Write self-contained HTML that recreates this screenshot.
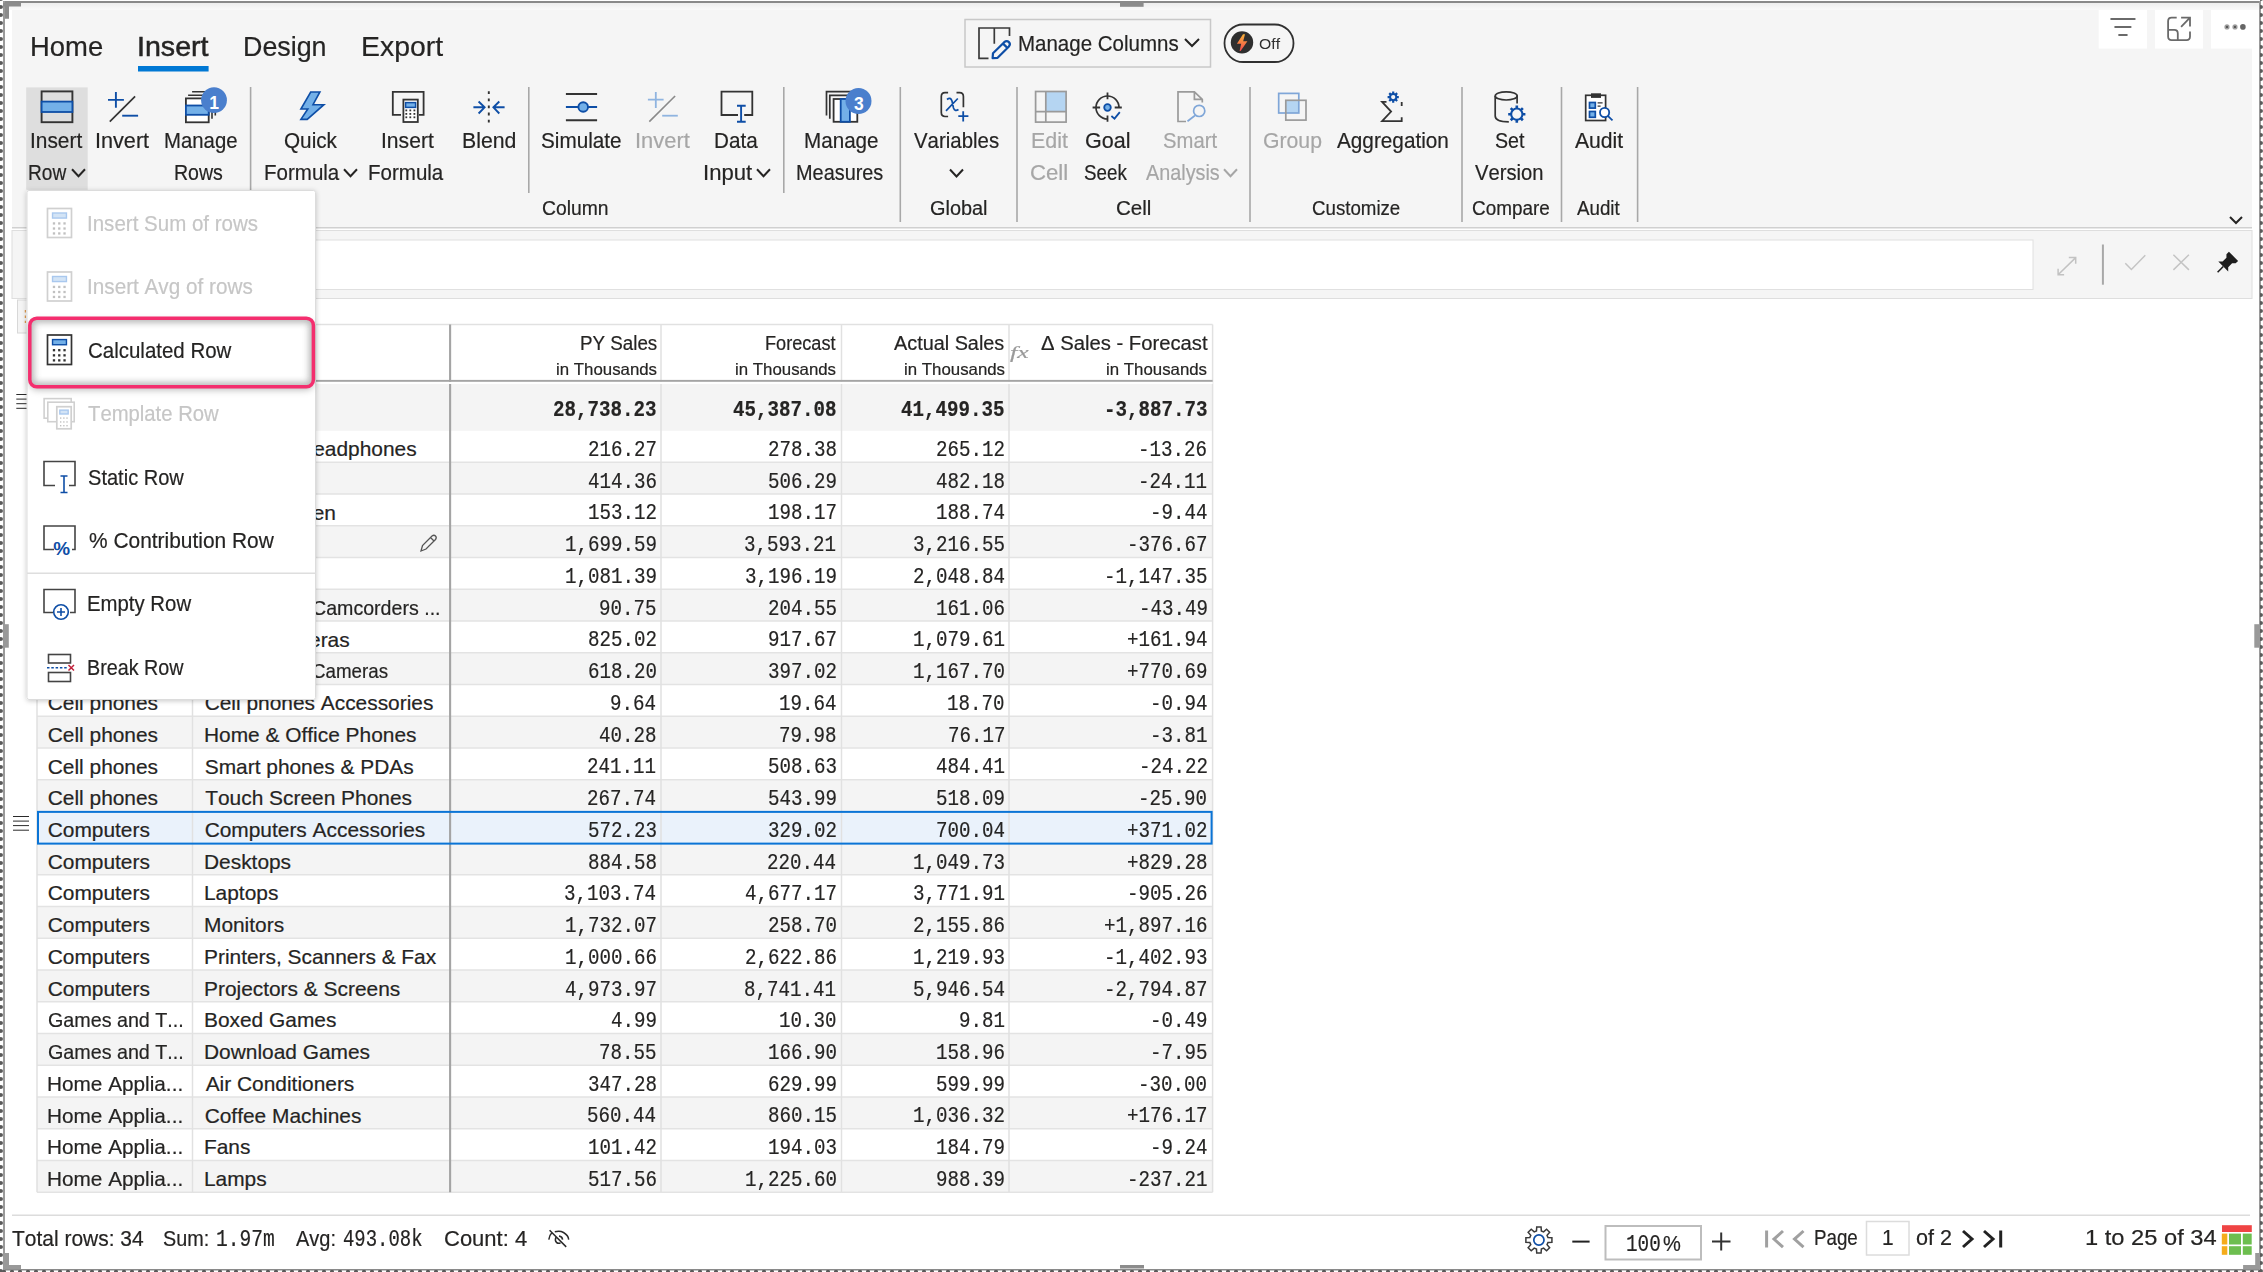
<!DOCTYPE html>
<html><head><meta charset="utf-8"><style>
html,body{margin:0;padding:0;width:2263px;height:1272px;overflow:hidden;background:#fff;}
body{position:relative;font-family:"Liberation Sans",sans-serif;color:#252423;font-kerning:none;}
.t{position:absolute;white-space:nowrap;line-height:1;transform-origin:0 0;-webkit-text-stroke-width:0.2px;}
svg{position:absolute;left:0;top:0;}
#menu{position:absolute;left:0;top:0;width:2263px;height:1272px;z-index:5;}
</style></head><body>
<svg width="2263" height="1272" viewBox="0 0 2263 1272"><rect x="12" y="10" width="2240" height="217.5" fill="#f5f5f5" /><linearGradient id="sh" x1="0" y1="0" x2="0" y2="1"><stop offset="0" stop-color="#eeeeee"/><stop offset="1" stop-color="#fafafa"/></linearGradient><rect x="5" y="3" width="2254" height="7" fill="url(#sh)" /><rect x="2098.7" y="10" width="48.30000000000018" height="38.6" fill="#ffffff" /><rect x="2155" y="10" width="48" height="38.6" fill="#ffffff" /><rect x="2211" y="10" width="47.5" height="38.6" fill="#ffffff" /><rect x="12" y="227" width="2240" height="1.5" fill="#d0d0d0" /><rect x="12" y="230.5" width="2240" height="68" fill="#f5f5f5" stroke="#dedede" stroke-width="1"/><rect x="30" y="240" width="2003" height="49.5" fill="#ffffff" stroke="#e0e0e0" stroke-width="1"/><rect x="17.5" y="300" width="30" height="33" fill="#f4f4f4" stroke="#d8d8d8" stroke-width="1"/><line x1="25.4" y1="310" x2="25.4" y2="323" stroke="#dd9a50" stroke-width="1.3" stroke-dasharray="2.6 2.8"/><rect x="3" y="1" width="2257" height="2" fill="#8a8a8a" /><rect x="3" y="1269" width="2257" height="1.5" fill="#8a8a8a" /><rect x="3" y="1" width="2" height="1269" fill="#9a9a9a" /><rect x="2259" y="1" width="2" height="1269" fill="#9a9a9a" /><pattern id="dotv" width="4" height="8" patternUnits="userSpaceOnUse" y="3"><ellipse cx="0.8" cy="4" rx="2.2" ry="1.9" fill="#5a5a5a"/></pattern><pattern id="doth" width="8" height="4" patternUnits="userSpaceOnUse"><circle cx="4" cy="3.5" r="2" fill="#5a5a5a"/></pattern><rect x="0" y="0" width="3" height="1272" fill="url(#dotv)" /><rect x="2260" y="0" width="3" height="1272" fill="url(#dotv)" /><rect x="0" y="1270" width="2263" height="2" fill="url(#doth)" /><path d="M3 3H21V6.6H9V18.7H5V6.6H3Z" fill="#8c8c8c"/><path d="M3 1269.3H21V1265.1H9V1253.1H5V1265.1H3Z" fill="#999999"/><path d="M2259.3 1269.3H2243.1V1265.1H2255.2V1253.1H2259.3Z" fill="#999999"/><rect x="1120" y="2.6" width="23.6" height="4.2" fill="#8c8c8c" /><rect x="1120" y="1265" width="24" height="3.5" fill="#8c8c8c" /><rect x="2254.3" y="624.2" width="5.7" height="23.5" fill="#999999" /><rect x="3.1" y="624.2" width="5.7" height="23.5" fill="#999999" /><rect x="138" y="66" width="70.6" height="5.5" fill="#0078d4" /><rect x="965" y="19.5" width="245.5" height="47.5" fill="none" stroke="#c8c8c8" stroke-width="1.5"/><path d="M1185 39L1192 46L1199 39" fill="none" stroke="#252423" stroke-width="2"/><path d="M988.5 58.3H979V28H1009.5V35.9 M994.3 28V43.8" fill="none" stroke="#3a3a3a" stroke-width="1.7"/><path d="M992.6 58.2L993 53.2L1004.2 42.2Q1006.8 40 1008.9 42.1Q1011 44.4 1008.7 46.7L997.6 57.8Z M1003 43.6L1007.4 47.9" fill="none" stroke="#0e4ea6" stroke-width="2.2" stroke-linejoin="round"/><rect x="1224.5" y="24.5" width="69" height="37.5" fill="none" rx="18.7" stroke="#303030" stroke-width="1.8"/><circle cx="1242" cy="42.4" r="11.2" fill="#2e2e2e"/><linearGradient id="lg" x1="0" y1="0" x2="0" y2="1"><stop offset="0" stop-color="#f9b43a"/><stop offset="1" stop-color="#f2484c"/></linearGradient><path d="M1243 34.2H1245L1243.2 41.3H1247.4L1240.6 50.9H1239.6L1241.2 43.8H1236.9Z" fill="url(#lg)"/><path d="M2111.2 19H2134.7 M2115.2 26.9H2130.6 M2119.1 34.9H2126.8" stroke="#6a6a6a" stroke-width="2" stroke-linecap="round"/><path d="M2176.7 17.7H2171.6Q2168.1 17.7 2168.1 21.2V36.6Q2168.1 40.1 2171.6 40.1H2186.5Q2190 40.1 2190 36.6V31.4 M2168.1 29.9H2174.3Q2177.8 29.9 2177.8 33.4V40.1 M2181.1 26.9L2190 17.7 M2181.1 17.7H2190V26.6" fill="none" stroke="#6a6a6a" stroke-width="1.8"/><circle cx="2227" cy="26.9" r="2.6" fill="#a0a0a0"/><circle cx="2227" cy="26.9" r="1.2" fill="#555"/><circle cx="2235" cy="26.9" r="2.6" fill="#a0a0a0"/><circle cx="2235" cy="26.9" r="1.2" fill="#555"/><circle cx="2242.9" cy="26.9" r="2.8" fill="#666"/><path d="M2230 217L2236 223L2242 217" fill="none" stroke="#252423" stroke-width="2"/><line x1="250.6" y1="87" x2="250.6" y2="190" stroke="#a8a8a8" stroke-width="1.6" /><line x1="528.8" y1="87" x2="528.8" y2="193" stroke="#a8a8a8" stroke-width="1.6" /><line x1="783.8" y1="87" x2="783.8" y2="193" stroke="#a8a8a8" stroke-width="1.6" /><line x1="900.3" y1="87" x2="900.3" y2="222" stroke="#a8a8a8" stroke-width="1.6" /><line x1="1017" y1="87" x2="1017" y2="222" stroke="#a8a8a8" stroke-width="1.6" /><line x1="1250" y1="87" x2="1250" y2="222" stroke="#a8a8a8" stroke-width="1.6" /><line x1="1462" y1="87" x2="1462" y2="222" stroke="#a8a8a8" stroke-width="1.6" /><line x1="1561.5" y1="87" x2="1561.5" y2="222" stroke="#a8a8a8" stroke-width="1.6" /><line x1="1637.6" y1="87" x2="1637.6" y2="222" stroke="#a8a8a8" stroke-width="1.6" /><rect x="26.2" y="87.4" width="61.5" height="102.4" fill="#dedede" /><path d="M72 169.2L78.5 176.2L85 169.2" fill="none" stroke="#252423" stroke-width="2"/><path d="M344 169.2L350.5 176.2L357 169.2" fill="none" stroke="#252423" stroke-width="2"/><path d="M757 169.2L763.5 176.2L770 169.2" fill="none" stroke="#252423" stroke-width="2"/><path d="M950 169.5L956.5 176.5L963 169.5" fill="none" stroke="#252423" stroke-width="2"/><path d="M1224 169.2L1230.5 176.2L1237 169.2" fill="none" stroke="#a6a6a6" stroke-width="2"/><path d="M2058.1 274.8L2075.7 257.6 M2068.8 257.6H2075.7V263.7 M2058.1 268.8V274.8H2064.1" fill="none" stroke="#c2c2c2" stroke-width="1.5"/><line x1="2102.9" y1="244.5" x2="2102.9" y2="284.7" stroke="#a8a8a8" stroke-width="2" /><path d="M2125.3 263.2L2131.4 269.5L2145.3 255.3" fill="none" stroke="#c4c4c4" stroke-width="1.5"/><path d="M2173.4 254.8L2188.9 269.9 M2188.9 254.8L2173.4 269.9" fill="none" stroke="#c4c4c4" stroke-width="1.5"/><g transform="translate(2217.6 272.2) rotate(45)"><path d="M0 0V-8" stroke="#1e1e1e" stroke-width="1.6"/><path d="M-7 -8H7L4 -11V-16.5L6.5 -19V-22.5H-6.5V-19L-4 -16.5V-11Z" fill="#1e1e1e"/></g><rect x="37" y="324.5" width="1175.6" height="857.8" fill="#ffffff" /><rect x="37" y="384" width="1175.6" height="46.8" fill="#f4f4f4" /><rect x="37" y="462.24" width="1175.6" height="31.74" fill="#f4f4f4" /><rect x="37" y="525.72" width="1175.6" height="31.74" fill="#f4f4f4" /><rect x="37" y="589.2" width="1175.6" height="31.74" fill="#f4f4f4" /><rect x="37" y="652.68" width="1175.6" height="31.74" fill="#f4f4f4" /><rect x="37" y="716.16" width="1175.6" height="31.74" fill="#f4f4f4" /><rect x="37" y="779.64" width="1175.6" height="31.74" fill="#f4f4f4" /><rect x="37" y="843.12" width="1175.6" height="31.74" fill="#f4f4f4" /><rect x="37" y="906.5999999999999" width="1175.6" height="31.74" fill="#f4f4f4" /><rect x="37" y="970.0799999999999" width="1175.6" height="31.74" fill="#f4f4f4" /><rect x="37" y="1033.56" width="1175.6" height="31.74" fill="#f4f4f4" /><rect x="37" y="1097.04" width="1175.6" height="31.74" fill="#f4f4f4" /><rect x="37" y="1160.52" width="1175.6" height="31.74" fill="#f4f4f4" /><rect x="37" y="811.38" width="1175.6" height="31.74" fill="#eaf2fb" /><line x1="37" y1="462.24" x2="1212.6" y2="462.24" stroke="#e3e3e3" stroke-width="1.5" /><line x1="37" y1="493.98" x2="1212.6" y2="493.98" stroke="#e3e3e3" stroke-width="1.5" /><line x1="37" y1="525.72" x2="1212.6" y2="525.72" stroke="#e3e3e3" stroke-width="1.5" /><line x1="37" y1="557.46" x2="1212.6" y2="557.46" stroke="#e3e3e3" stroke-width="1.5" /><line x1="37" y1="589.2" x2="1212.6" y2="589.2" stroke="#e3e3e3" stroke-width="1.5" /><line x1="37" y1="620.94" x2="1212.6" y2="620.94" stroke="#e3e3e3" stroke-width="1.5" /><line x1="37" y1="652.68" x2="1212.6" y2="652.68" stroke="#e3e3e3" stroke-width="1.5" /><line x1="37" y1="684.42" x2="1212.6" y2="684.42" stroke="#e3e3e3" stroke-width="1.5" /><line x1="37" y1="716.16" x2="1212.6" y2="716.16" stroke="#e3e3e3" stroke-width="1.5" /><line x1="37" y1="747.9" x2="1212.6" y2="747.9" stroke="#e3e3e3" stroke-width="1.5" /><line x1="37" y1="779.64" x2="1212.6" y2="779.64" stroke="#e3e3e3" stroke-width="1.5" /><line x1="37" y1="874.8599999999999" x2="1212.6" y2="874.8599999999999" stroke="#e3e3e3" stroke-width="1.5" /><line x1="37" y1="906.5999999999999" x2="1212.6" y2="906.5999999999999" stroke="#e3e3e3" stroke-width="1.5" /><line x1="37" y1="938.3399999999999" x2="1212.6" y2="938.3399999999999" stroke="#e3e3e3" stroke-width="1.5" /><line x1="37" y1="970.0799999999999" x2="1212.6" y2="970.0799999999999" stroke="#e3e3e3" stroke-width="1.5" /><line x1="37" y1="1001.8199999999999" x2="1212.6" y2="1001.8199999999999" stroke="#e3e3e3" stroke-width="1.5" /><line x1="37" y1="1033.56" x2="1212.6" y2="1033.56" stroke="#e3e3e3" stroke-width="1.5" /><line x1="37" y1="1065.3" x2="1212.6" y2="1065.3" stroke="#e3e3e3" stroke-width="1.5" /><line x1="37" y1="1097.04" x2="1212.6" y2="1097.04" stroke="#e3e3e3" stroke-width="1.5" /><line x1="37" y1="1128.78" x2="1212.6" y2="1128.78" stroke="#e3e3e3" stroke-width="1.5" /><line x1="37" y1="1160.52" x2="1212.6" y2="1160.52" stroke="#e3e3e3" stroke-width="1.5" /><line x1="37" y1="1192.26" x2="1212.6" y2="1192.26" stroke="#e3e3e3" stroke-width="1.5" /><line x1="37" y1="324.5" x2="1212.6" y2="324.5" stroke="#e1e1e1" stroke-width="1.5" /><line x1="37" y1="324.5" x2="37" y2="1192.3" stroke="#e1e1e1" stroke-width="1.5" /><line x1="192.5" y1="324.5" x2="192.5" y2="1192.3" stroke="#e1e1e1" stroke-width="1.5" /><line x1="661" y1="324.5" x2="661" y2="1192.3" stroke="#e1e1e1" stroke-width="1.5" /><line x1="841.5" y1="324.5" x2="841.5" y2="1192.3" stroke="#e1e1e1" stroke-width="1.5" /><line x1="1009" y1="324.5" x2="1009" y2="1192.3" stroke="#e1e1e1" stroke-width="1.5" /><line x1="1212.6" y1="324.5" x2="1212.6" y2="1192.3" stroke="#e1e1e1" stroke-width="1.5" /><line x1="450.1" y1="324.5" x2="450.1" y2="1192.3" stroke="#a4a4a4" stroke-width="2.1" /><rect x="37" y="381.8" width="1175.6" height="2.2" fill="#ffffff" /><rect x="37" y="379.9" width="1175.6" height="1.9" fill="#a4a4a4" /><rect x="38" y="811.88" width="1173.6" height="31.74" fill="none" stroke="#0a74d6" stroke-width="2"/><path d="M421 551L422.5 545.5L432 536Q434 534.5 435.5 536Q437 537.5 435.5 539.5L426 549Z M430.5 537.5L434 541" fill="none" stroke="#555" stroke-width="1.3"/><line x1="13" y1="816.5" x2="29" y2="816.5" stroke="#2a2a2a" stroke-width="1.0" /><line x1="13" y1="821.1" x2="29" y2="821.1" stroke="#2a2a2a" stroke-width="1.0" /><line x1="13" y1="825.6" x2="29" y2="825.6" stroke="#2a2a2a" stroke-width="1.0" /><line x1="13" y1="830.2" x2="29" y2="830.2" stroke="#2a2a2a" stroke-width="1.0" /><line x1="16.3" y1="394.5" x2="29" y2="394.5" stroke="#2a2a2a" stroke-width="1.0" /><line x1="16.3" y1="399.1" x2="29" y2="399.1" stroke="#2a2a2a" stroke-width="1.0" /><line x1="16.3" y1="403.7" x2="29" y2="403.7" stroke="#2a2a2a" stroke-width="1.0" /><line x1="16.3" y1="408.3" x2="29" y2="408.3" stroke="#2a2a2a" stroke-width="1.0" /><rect x="12" y="1214.5" width="2238" height="1.5" fill="#dcdcdc" /><path d="M548.8 1239.6Q549.5 1235 552 1232.5 M554.8 1231.8Q560 1230.5 563.5 1232.5Q568.5 1235.5 568.7 1239.6 M559 1236Q562.3 1236.5 562.6 1239.6 M556 1237Q554.5 1240.5 556.5 1242.5Q558.5 1243.8 560.5 1242.8 M549.6 1230.3L566.2 1246.9" fill="none" stroke="#2a2a2a" stroke-width="1.5"/><path d="M1536.47 1230.92L1536.72 1226.98L1541.08 1226.98L1541.33 1230.92L1543.60 1231.86L1546.57 1229.25L1549.65 1232.33L1547.04 1235.30L1547.98 1237.57L1551.92 1237.82L1551.92 1242.18L1547.98 1242.43L1547.04 1244.70L1549.65 1247.67L1546.57 1250.75L1543.60 1248.14L1541.33 1249.08L1541.08 1253.02L1536.72 1253.02L1536.47 1249.08L1534.20 1248.14L1531.23 1250.75L1528.15 1247.67L1530.76 1244.70L1529.82 1242.43L1525.88 1242.18L1525.88 1237.82L1529.82 1237.57L1530.76 1235.30L1528.15 1232.33L1531.23 1229.25L1534.20 1231.86Z" fill="none" stroke="#3a3a3a" stroke-width="1.5" stroke-linejoin="miter"/><circle cx="1538.9" cy="1240" r="5.1" fill="none" stroke="#0e4ea6" stroke-width="1.7"/><line x1="1572.3" y1="1241.6" x2="1589.6" y2="1241.6" stroke="#222" stroke-width="2" /><rect x="1605.5" y="1226" width="95.5" height="33.5" fill="#fff" stroke="#bdbdbd" stroke-width="2"/><path d="M1712 1241.5H1730.5 M1721.2 1232.5V1250.5" stroke="#333" stroke-width="2"/><line x1="1766.6" y1="1230.5" x2="1766.6" y2="1247.5" stroke="#a0a0a0" stroke-width="3" /><path d="M1783 1231L1774 1239.1L1783 1247.2" fill="none" stroke="#a0a0a0" stroke-width="3"/><path d="M1803.5 1231L1794.5 1239.1L1803.5 1247.2" fill="none" stroke="#a0a0a0" stroke-width="3"/><rect x="1866.5" y="1221.5" width="42.5" height="33.5" fill="#fff" stroke="#dcdcdc" stroke-width="1.5"/><path d="M1963 1231L1972 1239L1963 1247" fill="none" stroke="#222" stroke-width="3"/><path d="M1984 1231L1993 1239L1984 1247" fill="none" stroke="#222" stroke-width="3"/><line x1="2000.7" y1="1230.5" x2="2000.7" y2="1247.5" stroke="#222" stroke-width="3" /><rect x="2222" y="1225.2" width="29.8" height="6.8" fill="#ef4444" /><rect x="2221.8" y="1233.6" width="5.5" height="10.9" fill="#f5ac1b" /><rect x="2221.8" y="1246.2" width="5.5" height="8.6" fill="#f5ac1b" /><rect x="2229" y="1233.6" width="12" height="10.9" fill="#6dbe4f" /><rect x="2229" y="1246.2" width="12" height="8.6" fill="#6dbe4f" /><rect x="2242.8" y="1233.6" width="8.899999999999636" height="10.9" fill="#6dbe4f" /><rect x="2242.8" y="1246.2" width="8.899999999999636" height="8.6" fill="#6dbe4f" /><rect x="41.6" y="91.4" width="30.8" height="30.8" fill="none" stroke="#333333" stroke-width="1.9"/><rect x="41.6" y="101.6" width="30.8" height="10.4" fill="#73b0e8" stroke="#0e4ea6" stroke-width="1.8"/><path d="M108 99.9H123.9 M115.9 92V107.7" stroke="#0e4ea6" stroke-width="1.9"/><line x1="109.8" y1="121.6" x2="135.1" y2="96.3" stroke="#333333" stroke-width="1.7" /><path d="M122.2 115.7H138.1" stroke="#0e4ea6" stroke-width="1.9"/><path d="M192.1 91.8H212 M188.1 95.3H212 M212 95.3V118.7 M215.3 91.8V115.6" fill="none" stroke="#333333" stroke-width="1.6"/><rect x="185.9" y="98.4" width="22.8" height="23.9" fill="#ffffff" stroke="#333333" stroke-width="1.8"/><rect x="185.9" y="105.5" width="22.8" height="9.3" fill="#73b0e8" stroke="#0e4ea6" stroke-width="1.8"/><circle cx="214" cy="100.2" r="12.9" fill="#4a7fcd"/><text x="214" y="109" text-anchor="middle" font-family="Liberation Sans" font-weight="700" font-size="17.5" fill="#fff">1</text><path d="M310.7 92H319.9L313 104.7H323.9L307.2 119.4H300.9L307.8 109H300.9Z" fill="#73b0e8" stroke="#0e4ea6" stroke-width="1.6" stroke-linejoin="miter"/><path d="M401 114.8H392.8V91.8H423.6V114.8H419" fill="none" stroke="#333333" stroke-width="1.8"/><rect x="403.4" y="99.6" width="14.4" height="22.4" fill="#ffffff" stroke="#333333" stroke-width="1.8"/><rect x="405.6" y="102.6" width="10" height="4.8" fill="#73b0e8" stroke="#0e4ea6" stroke-width="1.5"/><rect x="405.40000000000003" y="109.5" width="1.8" height="1.8" fill="#333333" /><rect x="409.40000000000003" y="109.5" width="1.8" height="1.8" fill="#333333" /><rect x="413.5" y="109.5" width="1.8" height="1.8" fill="#333333" /><rect x="405.40000000000003" y="113.0" width="1.8" height="1.8" fill="#333333" /><rect x="409.40000000000003" y="113.0" width="1.8" height="1.8" fill="#333333" /><rect x="413.5" y="113.0" width="1.8" height="1.8" fill="#333333" /><rect x="405.40000000000003" y="116.39999999999999" width="1.8" height="1.8" fill="#333333" /><rect x="409.40000000000003" y="116.39999999999999" width="1.8" height="1.8" fill="#333333" /><rect x="413.5" y="116.39999999999999" width="1.8" height="1.8" fill="#333333" /><line x1="488.8" y1="91.3" x2="488.8" y2="122.5" stroke="#333333" stroke-width="1.9" stroke-dasharray="2.8 4.3"/><path d="M473.4 107.3H484.8 M478.6 101.5L484.6 107.3L478.6 113.5 M493.2 107.3H504.6 M499.3 101.5L493.4 107.3L499.3 113.5" fill="none" stroke="#0e4ea6" stroke-width="1.9"/><path d="M565.9 93.9H597.1 M565.9 120.3H597.1" stroke="#333333" stroke-width="2"/><path d="M565.9 107H578.3 M588.1 107H597.1" stroke="#0e4ea6" stroke-width="2"/><circle cx="583.2" cy="107" r="4.8" fill="#73b0e8" stroke="#0e4ea6" stroke-width="1.9"/><path d="M647.9 99.7H663.6 M655.8 92.1V107.9" stroke="#8fb4e0" stroke-width="1.8"/><line x1="649.3" y1="121.6" x2="675.1" y2="96" stroke="#8a8a8a" stroke-width="1.6" /><path d="M662.2 115.7H677.8" stroke="#8fb4e0" stroke-width="1.8"/><path d="M738 115H721.5V91.6H752.3V115H744.2" fill="none" stroke="#333333" stroke-width="1.8"/><path d="M741.1 105.8V121.8 M737 105.8H745.7 M737 121.8H745.7" fill="none" stroke="#0e4ea6" stroke-width="1.9"/><path d="M826.5 115.5V91.6H858 M829.8 118.7V95.4H858" fill="none" stroke="#333333" stroke-width="1.7"/><rect x="833.6" y="99" width="23.7" height="22.8" fill="#ffffff" stroke="#333333" stroke-width="1.8"/><rect x="840.7" y="99" width="9.2" height="22.8" fill="#73b0e8" stroke="#0e4ea6" stroke-width="1.8"/><circle cx="858.5" cy="101" r="13" fill="#4a7fcd"/><text x="858.8" y="109.6" text-anchor="middle" font-family="Liberation Sans" font-weight="700" font-size="17.5" fill="#fff">3</text><path d="M948.1 92.6H945Q941.3 92.6 941.3 96.5V112.6Q941.3 116.5 945 116.5H948.1 M956.5 92.6H959.6Q963.4 92.6 963.4 96.5V107.2" fill="none" stroke="#333333" stroke-width="1.7"/><path d="M947 99.5Q950.5 96.5 952 101L953.5 108Q955 112 958.5 109.5 M957.8 98.5L946 110.8" fill="none" stroke="#0e4ea6" stroke-width="1.7"/><path d="M958.3 116.2H968.4 M963.2 111.2V121.4" stroke="#0e4ea6" stroke-width="1.8"/><rect x="1045.8" y="91.5" width="20.3" height="20.1" fill="#b5d5f2" /><rect x="1035.6" y="91.5" width="30.5" height="30.6" fill="none" stroke="#9a9a9a" stroke-width="1.7"/><path d="M1045.8 91.5V122.1 M1035.6 111.6H1066.1" stroke="#9a9a9a" stroke-width="1.7"/><path d="M1119 107.5A11.5 11.5 0 1 0 1107.5 119" fill="none" stroke="#333333" stroke-width="1.7"/><path d="M1107.5 92.6V99.3 M1092.6 107.5H1100.1 M1114.7 107.5H1121.8 M1107.5 115.6V121.8" stroke="#333333" stroke-width="1.8"/><circle cx="1107.5" cy="107.5" r="3.3" fill="#73b0e8" stroke="#0e4ea6" stroke-width="1.8"/><path d="M1111.4 116L1114.5 118.6L1119.8 112.1" fill="none" stroke="#0e4ea6" stroke-width="1.8"/><path d="M1186 121.5H1178V91.8H1194.4L1202.3 99.3V102.4 M1194.4 91.8V99.3H1202.3" fill="none" stroke="#9a9a9a" stroke-width="1.7"/><circle cx="1199.2" cy="110.9" r="5.6" fill="none" stroke="#7fa6d8" stroke-width="1.7"/><line x1="1195" y1="115.5" x2="1187.5" y2="121.2" stroke="#7fa6d8" stroke-width="1.7" /><rect x="1285.8" y="100.3" width="13" height="12.7" fill="#b5d5f2" /><rect x="1278.7" y="93.4" width="20.1" height="19.6" fill="none" stroke="#7fa6d8" stroke-width="1.7"/><rect x="1285.8" y="100.3" width="20.2" height="19.8" fill="none" stroke="#9a9a9a" stroke-width="1.7"/><path d="M1386.5 101.9H1382.1L1391.1 111.6L1382.1 121.2H1401.7V117.3 M1401.7 101.9V106.1" fill="none" stroke="#333333" stroke-width="1.8" stroke-linejoin="miter"/><path d="M1396.20 97.10L1398.80 97.10 M1395.32 99.22L1397.16 101.06 M1393.20 100.10L1393.20 102.70 M1391.08 99.22L1389.24 101.06 M1390.20 97.10L1387.60 97.10 M1391.08 94.98L1389.24 93.14 M1393.20 94.10L1393.20 91.50 M1395.32 94.98L1397.16 93.14 " stroke="#0e4ea6" stroke-width="2.2" stroke-linecap="butt"/><circle cx="1393.2" cy="97.1" r="3.1" fill="#f5f5f5" stroke="#0e4ea6" stroke-width="1.9"/><path d="M1495.2 96V116Q1495.2 121.8 1508.8 121.8 M1517.1 96V103.6" fill="none" stroke="#333333" stroke-width="1.7"/><ellipse cx="1506.2" cy="95.9" rx="11" ry="4.1" fill="none" stroke="#333333" stroke-width="1.7"/><path d="M1521.80 114.20L1525.40 114.20 M1520.34 117.74L1522.88 120.28 M1516.80 119.20L1516.80 122.80 M1513.26 117.74L1510.72 120.28 M1511.80 114.20L1508.20 114.20 M1513.26 110.66L1510.72 108.12 M1516.80 109.20L1516.80 105.60 M1520.34 110.66L1522.88 108.12 " stroke="#0e4ea6" stroke-width="2.6" stroke-linecap="butt"/><circle cx="1516.8" cy="114.2" r="5.6" fill="#f5f5f5" stroke="#0e4ea6" stroke-width="2"/><rect x="1585.7" y="95.3" width="19.9" height="25.2" fill="#ffffff" stroke="#333333" stroke-width="1.7"/><rect x="1591" y="93.3" width="10" height="4.6" fill="#333333" /><rect x="1589.5" y="102.5" width="5.8" height="5.6" fill="#73b0e8" stroke="#0e4ea6" stroke-width="1.7"/><rect x="1589.5" y="111.5" width="5.8" height="5.8" fill="#73b0e8" stroke="#0e4ea6" stroke-width="1.7"/><path d="M1597.6 102.9H1602.6 M1597.6 106.2H1600.6" stroke="#333333" stroke-width="1.3"/><circle cx="1604.6" cy="112.5" r="4.6" fill="#ffffff" stroke="#0e4ea6" stroke-width="1.8"/><line x1="1607.8" y1="115.9" x2="1612.5" y2="120.3" stroke="#0e4ea6" stroke-width="1.8" /></svg>
<div class="t" style="left:29.55px;top:32.90px;font-size:28px;transform:scaleX(0.9796);">Home</div><div class="t" style="left:136.57px;top:33.10px;font-size:28px;transform:scaleX(1.0215);-webkit-text-stroke:0.5px #252423;">Insert</div><div class="t" style="left:243.20px;top:33.10px;font-size:28px;transform:scaleX(0.9585);">Design</div><div class="t" style="left:361.07px;top:33.10px;font-size:28px;transform:scaleX(1.0149);">Export</div><div class="t" style="left:1017.82px;top:33.05px;font-size:22.5px;transform:scaleX(0.9109);">Manage Columns</div><div class="t" style="left:1259.26px;top:37.33px;font-size:14.5px;color:#303030;transform:scaleX(1.0861);-webkit-text-stroke-width:0;">Off</div><div class="t" style="left:30.08px;top:130.47px;font-size:22.6px;transform:scaleX(0.9247);">Insert</div><div class="t" style="left:28.13px;top:162.27px;font-size:22.6px;transform:scaleX(0.8453);">Row</div><div class="t" style="left:95.41px;top:130.47px;font-size:22.6px;transform:scaleX(0.9579);">Invert</div><div class="t" style="left:163.63px;top:130.47px;font-size:22.6px;transform:scaleX(0.9007);">Manage</div><div class="t" style="left:174.30px;top:162.27px;font-size:22.6px;transform:scaleX(0.8653);">Rows</div><div class="t" style="left:284.23px;top:130.47px;font-size:22.6px;transform:scaleX(0.9167);">Quick</div><div class="t" style="left:263.72px;top:162.27px;font-size:22.6px;transform:scaleX(0.9084);">Formula</div><div class="t" style="left:381.36px;top:130.47px;font-size:22.6px;transform:scaleX(0.9340);">Insert</div><div class="t" style="left:368.32px;top:162.27px;font-size:22.6px;transform:scaleX(0.9084);">Formula</div><div class="t" style="left:461.66px;top:130.47px;font-size:22.6px;transform:scaleX(0.9415);">Blend</div><div class="t" style="left:541.37px;top:130.47px;font-size:22.6px;transform:scaleX(0.9171);">Simulate</div><div class="t" style="left:634.69px;top:130.47px;font-size:22.6px;color:#a6a6a6;transform:scaleX(0.9690);">Invert</div><div class="t" style="left:714.10px;top:130.47px;font-size:22.6px;transform:scaleX(0.9155);">Data</div><div class="t" style="left:702.97px;top:162.27px;font-size:22.6px;transform:scaleX(0.9787);">Input</div><div class="t" style="left:804.31px;top:130.47px;font-size:22.6px;transform:scaleX(0.9134);">Manage</div><div class="t" style="left:796.37px;top:162.27px;font-size:22.6px;transform:scaleX(0.8802);">Measures</div><div class="t" style="left:913.92px;top:130.47px;font-size:22.6px;transform:scaleX(0.9035);">Variables</div><div class="t" style="left:1031.24px;top:130.47px;font-size:22.6px;color:#a6a6a6;transform:scaleX(0.9478);">Edit</div><div class="t" style="left:1029.87px;top:162.27px;font-size:22.6px;color:#a6a6a6;transform:scaleX(0.9814);">Cell</div><div class="t" style="left:1084.92px;top:130.47px;font-size:22.6px;transform:scaleX(0.9537);">Goal</div><div class="t" style="left:1084.15px;top:162.27px;font-size:22.6px;transform:scaleX(0.8315);">Seek</div><div class="t" style="left:1163.09px;top:130.47px;font-size:22.6px;color:#a6a6a6;transform:scaleX(0.8968);">Smart</div><div class="t" style="left:1145.96px;top:162.27px;font-size:22.6px;color:#a6a6a6;transform:scaleX(0.8763);">Analysis</div><div class="t" style="left:1262.94px;top:130.47px;font-size:22.6px;color:#a6a6a6;transform:scaleX(0.9386);">Group</div><div class="t" style="left:1336.96px;top:130.47px;font-size:22.6px;transform:scaleX(0.9180);">Aggregation</div><div class="t" style="left:1494.61px;top:130.47px;font-size:22.6px;transform:scaleX(0.8703);">Set</div><div class="t" style="left:1474.92px;top:162.27px;font-size:22.6px;transform:scaleX(0.8942);">Version</div><div class="t" style="left:1574.96px;top:130.47px;font-size:22.6px;transform:scaleX(0.9356);">Audit</div><div class="t" style="left:542.02px;top:197.97px;font-size:20px;transform:scaleX(0.9655);">Column</div><div class="t" style="left:930.30px;top:197.97px;font-size:20px;transform:scaleX(0.9953);">Global</div><div class="t" style="left:1115.95px;top:197.97px;font-size:20px;transform:scaleX(1.0280);">Cell</div><div class="t" style="left:1311.55px;top:197.97px;font-size:20px;transform:scaleX(0.9343);">Customize</div><div class="t" style="left:1472.04px;top:197.97px;font-size:20px;transform:scaleX(0.9457);">Compare</div><div class="t" style="left:1577.46px;top:197.97px;font-size:20px;transform:scaleX(0.9361);">Audit</div><div class="t" style="left:579.76px;top:334.29px;font-size:19.5px;transform:scaleX(0.9632);">PY Sales</div><div class="t" style="left:765.08px;top:334.29px;font-size:19.5px;transform:scaleX(0.9300);">Forecast</div><div class="t" style="left:894.16px;top:334.29px;font-size:19.5px;transform:scaleX(1.0171);">Actual Sales</div><div class="t" style="left:1040.89px;top:334.29px;font-size:19.5px;transform:scaleX(1.0384);">Δ Sales - Forecast</div><div class="t" style="left:555.87px;top:361.23px;font-size:16.5px;transform:scaleX(1.0199);">in Thousands</div><div class="t" style="left:735.37px;top:361.23px;font-size:16.5px;transform:scaleX(1.0199);">in Thousands</div><div class="t" style="left:903.57px;top:361.23px;font-size:16.5px;transform:scaleX(1.0199);">in Thousands</div><div class="t" style="left:1106.07px;top:361.23px;font-size:16.5px;transform:scaleX(1.0199);">in Thousands</div><div class="t" style="left:1010.32px;top:344.01px;font-size:17px;font-family:'Liberation Serif', serif;color:#9a9a9a;transform:scaleX(1.5124);font-style:italic;">fx</div><div class="t" style="left:552.86px;top:399.74px;font-size:22px;font-family:'Liberation Mono', monospace;font-weight:700;transform:scaleX(0.8712);">28,738.23</div><div class="t" style="left:733.00px;top:399.74px;font-size:22px;font-family:'Liberation Mono', monospace;font-weight:700;transform:scaleX(0.8712);">45,387.08</div><div class="t" style="left:901.18px;top:399.74px;font-size:22px;font-family:'Liberation Mono', monospace;font-weight:700;transform:scaleX(0.8712);">41,499.35</div><div class="t" style="left:1103.66px;top:399.74px;font-size:22px;font-family:'Liberation Mono', monospace;font-weight:700;transform:scaleX(0.8712);">-3,887.73</div><div class="t" style="left:298.13px;top:439.11px;font-size:20.9px;">Headphones</div><div class="t" style="left:587.89px;top:439.94px;font-size:22px;font-family:'Liberation Mono', monospace;transform:scaleX(0.8712);">216.27</div><div class="t" style="left:767.76px;top:439.94px;font-size:22px;font-family:'Liberation Mono', monospace;transform:scaleX(0.8712);">278.38</div><div class="t" style="left:936.06px;top:439.94px;font-size:22px;font-family:'Liberation Mono', monospace;transform:scaleX(0.8712);">265.12</div><div class="t" style="left:1138.45px;top:439.94px;font-size:22px;font-family:'Liberation Mono', monospace;transform:scaleX(0.8712);">-13.26</div><div class="t" style="left:587.65px;top:471.68px;font-size:22px;font-family:'Liberation Mono', monospace;transform:scaleX(0.8712);">414.36</div><div class="t" style="left:767.82px;top:471.68px;font-size:22px;font-family:'Liberation Mono', monospace;transform:scaleX(0.8712);">506.29</div><div class="t" style="left:935.97px;top:471.68px;font-size:22px;font-family:'Liberation Mono', monospace;transform:scaleX(0.8712);">482.18</div><div class="t" style="left:1138.12px;top:471.68px;font-size:22px;font-family:'Liberation Mono', monospace;transform:scaleX(0.8712);">-24.11</div><div class="t" style="left:197.71px;top:502.59px;font-size:20.9px;">Recording Pen</div><div class="t" style="left:587.76px;top:503.42px;font-size:22px;font-family:'Liberation Mono', monospace;transform:scaleX(0.8712);">153.12</div><div class="t" style="left:768.00px;top:503.42px;font-size:22px;font-family:'Liberation Mono', monospace;transform:scaleX(0.8712);">198.17</div><div class="t" style="left:935.68px;top:503.42px;font-size:22px;font-family:'Liberation Mono', monospace;transform:scaleX(0.8712);">188.74</div><div class="t" style="left:1149.68px;top:503.42px;font-size:22px;font-family:'Liberation Mono', monospace;transform:scaleX(0.8712);">-9.44</div><div class="t" style="left:564.70px;top:535.16px;font-size:22px;font-family:'Liberation Mono', monospace;transform:scaleX(0.8712);">1,699.59</div><div class="t" style="left:744.40px;top:535.16px;font-size:22px;font-family:'Liberation Mono', monospace;transform:scaleX(0.8712);">3,593.21</div><div class="t" style="left:912.89px;top:535.16px;font-size:22px;font-family:'Liberation Mono', monospace;transform:scaleX(0.8712);">3,216.55</div><div class="t" style="left:1127.18px;top:535.16px;font-size:22px;font-family:'Liberation Mono', monospace;transform:scaleX(0.8712);">-376.67</div><div class="t" style="left:564.70px;top:566.90px;font-size:22px;font-family:'Liberation Mono', monospace;transform:scaleX(0.8712);">1,081.39</div><div class="t" style="left:744.80px;top:566.90px;font-size:22px;font-family:'Liberation Mono', monospace;transform:scaleX(0.8712);">3,196.19</div><div class="t" style="left:912.66px;top:566.90px;font-size:22px;font-family:'Liberation Mono', monospace;transform:scaleX(0.8712);">2,048.84</div><div class="t" style="left:1103.89px;top:566.90px;font-size:22px;font-family:'Liberation Mono', monospace;transform:scaleX(0.8712);">-1,147.35</div><div class="t" style="left:312.20px;top:597.81px;font-size:20.9px;transform:scaleX(0.9383);">Camcorders ...</div><div class="t" style="left:599.11px;top:598.64px;font-size:22px;font-family:'Liberation Mono', monospace;transform:scaleX(0.8712);">90.75</div><div class="t" style="left:767.71px;top:598.64px;font-size:22px;font-family:'Liberation Mono', monospace;transform:scaleX(0.8712);">204.55</div><div class="t" style="left:935.95px;top:598.64px;font-size:22px;font-family:'Liberation Mono', monospace;transform:scaleX(0.8712);">161.06</div><div class="t" style="left:1138.52px;top:598.64px;font-size:22px;font-family:'Liberation Mono', monospace;transform:scaleX(0.8712);">-43.49</div><div class="t" style="left:154.63px;top:629.55px;font-size:20.9px;">Digital SLR Cameras</div><div class="t" style="left:587.76px;top:630.38px;font-size:22px;font-family:'Liberation Mono', monospace;transform:scaleX(0.8712);">825.02</div><div class="t" style="left:768.00px;top:630.38px;font-size:22px;font-family:'Liberation Mono', monospace;transform:scaleX(0.8712);">917.67</div><div class="t" style="left:912.60px;top:630.38px;font-size:22px;font-family:'Liberation Mono', monospace;transform:scaleX(0.8712);">1,079.61</div><div class="t" style="left:1126.66px;top:630.38px;font-size:22px;font-family:'Liberation Mono', monospace;transform:scaleX(0.8712);">+161.94</div><div class="t" style="left:312.24px;top:661.29px;font-size:20.9px;transform:scaleX(0.8979);">Cameras</div><div class="t" style="left:587.57px;top:662.12px;font-size:22px;font-family:'Liberation Mono', monospace;transform:scaleX(0.8712);">618.20</div><div class="t" style="left:767.86px;top:662.12px;font-size:22px;font-family:'Liberation Mono', monospace;transform:scaleX(0.8712);">397.02</div><div class="t" style="left:912.85px;top:662.12px;font-size:22px;font-family:'Liberation Mono', monospace;transform:scaleX(0.8712);">1,167.70</div><div class="t" style="left:1127.00px;top:662.12px;font-size:22px;font-family:'Liberation Mono', monospace;transform:scaleX(0.8712);">+770.69</div><div class="t" style="left:47.73px;top:693.03px;font-size:20.9px;">Cell phones</div><div class="t" style="left:204.63px;top:693.03px;font-size:20.9px;">Cell phones Accessories</div><div class="t" style="left:610.38px;top:693.86px;font-size:22px;font-family:'Liberation Mono', monospace;transform:scaleX(0.8712);">9.64</div><div class="t" style="left:778.98px;top:693.86px;font-size:22px;font-family:'Liberation Mono', monospace;transform:scaleX(0.8712);">19.64</div><div class="t" style="left:947.37px;top:693.86px;font-size:22px;font-family:'Liberation Mono', monospace;transform:scaleX(0.8712);">18.70</div><div class="t" style="left:1149.68px;top:693.86px;font-size:22px;font-family:'Liberation Mono', monospace;transform:scaleX(0.8712);">-0.94</div><div class="t" style="left:47.73px;top:724.77px;font-size:20.9px;">Cell phones</div><div class="t" style="left:203.99px;top:724.77px;font-size:20.9px;">Home &amp; Office Phones</div><div class="t" style="left:599.16px;top:725.60px;font-size:22px;font-family:'Liberation Mono', monospace;transform:scaleX(0.8712);">40.28</div><div class="t" style="left:779.26px;top:725.60px;font-size:22px;font-family:'Liberation Mono', monospace;transform:scaleX(0.8712);">79.98</div><div class="t" style="left:947.70px;top:725.60px;font-size:22px;font-family:'Liberation Mono', monospace;transform:scaleX(0.8712);">76.17</div><div class="t" style="left:1149.62px;top:725.60px;font-size:22px;font-family:'Liberation Mono', monospace;transform:scaleX(0.8712);">-3.81</div><div class="t" style="left:47.73px;top:756.51px;font-size:20.9px;">Cell phones</div><div class="t" style="left:204.76px;top:756.51px;font-size:20.9px;">Smart phones &amp; PDAs</div><div class="t" style="left:587.32px;top:757.34px;font-size:22px;font-family:'Liberation Mono', monospace;transform:scaleX(0.8712);">241.11</div><div class="t" style="left:767.71px;top:757.34px;font-size:22px;font-family:'Liberation Mono', monospace;transform:scaleX(0.8712);">508.63</div><div class="t" style="left:935.62px;top:757.34px;font-size:22px;font-family:'Liberation Mono', monospace;transform:scaleX(0.8712);">484.41</div><div class="t" style="left:1138.56px;top:757.34px;font-size:22px;font-family:'Liberation Mono', monospace;transform:scaleX(0.8712);">-24.22</div><div class="t" style="left:47.73px;top:788.25px;font-size:20.9px;">Cell phones</div><div class="t" style="left:205.24px;top:788.25px;font-size:20.9px;">Touch Screen Phones</div><div class="t" style="left:587.38px;top:789.08px;font-size:22px;font-family:'Liberation Mono', monospace;transform:scaleX(0.8712);">267.74</div><div class="t" style="left:767.82px;top:789.08px;font-size:22px;font-family:'Liberation Mono', monospace;transform:scaleX(0.8712);">543.99</div><div class="t" style="left:936.02px;top:789.08px;font-size:22px;font-family:'Liberation Mono', monospace;transform:scaleX(0.8712);">518.09</div><div class="t" style="left:1138.37px;top:789.08px;font-size:22px;font-family:'Liberation Mono', monospace;transform:scaleX(0.8712);">-25.90</div><div class="t" style="left:47.73px;top:819.99px;font-size:20.9px;">Computers</div><div class="t" style="left:204.63px;top:819.99px;font-size:20.9px;">Computers Accessories</div><div class="t" style="left:587.61px;top:820.82px;font-size:22px;font-family:'Liberation Mono', monospace;transform:scaleX(0.8712);">572.23</div><div class="t" style="left:767.86px;top:820.82px;font-size:22px;font-family:'Liberation Mono', monospace;transform:scaleX(0.8712);">329.02</div><div class="t" style="left:935.68px;top:820.82px;font-size:22px;font-family:'Liberation Mono', monospace;transform:scaleX(0.8712);">700.04</div><div class="t" style="left:1127.04px;top:820.82px;font-size:22px;font-family:'Liberation Mono', monospace;transform:scaleX(0.8712);">+371.02</div><div class="t" style="left:47.73px;top:851.73px;font-size:20.9px;">Computers</div><div class="t" style="left:203.99px;top:851.73px;font-size:20.9px;">Desktops</div><div class="t" style="left:587.66px;top:852.56px;font-size:22px;font-family:'Liberation Mono', monospace;transform:scaleX(0.8712);">884.58</div><div class="t" style="left:767.48px;top:852.56px;font-size:22px;font-family:'Liberation Mono', monospace;transform:scaleX(0.8712);">220.44</div><div class="t" style="left:912.89px;top:852.56px;font-size:22px;font-family:'Liberation Mono', monospace;transform:scaleX(0.8712);">1,049.73</div><div class="t" style="left:1126.95px;top:852.56px;font-size:22px;font-family:'Liberation Mono', monospace;transform:scaleX(0.8712);">+829.28</div><div class="t" style="left:47.73px;top:883.47px;font-size:20.9px;">Computers</div><div class="t" style="left:203.99px;top:883.47px;font-size:20.9px;">Laptops</div><div class="t" style="left:564.36px;top:884.30px;font-size:22px;font-family:'Liberation Mono', monospace;transform:scaleX(0.8712);">3,103.74</div><div class="t" style="left:744.98px;top:884.30px;font-size:22px;font-family:'Liberation Mono', monospace;transform:scaleX(0.8712);">4,677.17</div><div class="t" style="left:912.60px;top:884.30px;font-size:22px;font-family:'Liberation Mono', monospace;transform:scaleX(0.8712);">3,771.91</div><div class="t" style="left:1126.93px;top:884.30px;font-size:22px;font-family:'Liberation Mono', monospace;transform:scaleX(0.8712);">-905.26</div><div class="t" style="left:47.73px;top:915.21px;font-size:20.9px;">Computers</div><div class="t" style="left:203.99px;top:915.21px;font-size:20.9px;">Monitors</div><div class="t" style="left:564.88px;top:916.04px;font-size:22px;font-family:'Liberation Mono', monospace;transform:scaleX(0.8712);">1,732.07</div><div class="t" style="left:767.67px;top:916.04px;font-size:22px;font-family:'Liberation Mono', monospace;transform:scaleX(0.8712);">258.70</div><div class="t" style="left:912.93px;top:916.04px;font-size:22px;font-family:'Liberation Mono', monospace;transform:scaleX(0.8712);">2,155.86</div><div class="t" style="left:1103.93px;top:916.04px;font-size:22px;font-family:'Liberation Mono', monospace;transform:scaleX(0.8712);">+1,897.16</div><div class="t" style="left:47.73px;top:946.95px;font-size:20.9px;">Computers</div><div class="t" style="left:203.99px;top:946.95px;font-size:20.9px;">Printers, Scanners &amp; Fax</div><div class="t" style="left:564.63px;top:947.78px;font-size:22px;font-family:'Liberation Mono', monospace;transform:scaleX(0.8712);">1,000.66</div><div class="t" style="left:744.73px;top:947.78px;font-size:22px;font-family:'Liberation Mono', monospace;transform:scaleX(0.8712);">2,622.86</div><div class="t" style="left:912.89px;top:947.78px;font-size:22px;font-family:'Liberation Mono', monospace;transform:scaleX(0.8712);">1,219.93</div><div class="t" style="left:1103.89px;top:947.78px;font-size:22px;font-family:'Liberation Mono', monospace;transform:scaleX(0.8712);">-1,402.93</div><div class="t" style="left:47.73px;top:978.69px;font-size:20.9px;">Computers</div><div class="t" style="left:203.99px;top:978.69px;font-size:20.9px;">Projectors &amp; Screens</div><div class="t" style="left:564.88px;top:979.52px;font-size:22px;font-family:'Liberation Mono', monospace;transform:scaleX(0.8712);">4,973.97</div><div class="t" style="left:744.40px;top:979.52px;font-size:22px;font-family:'Liberation Mono', monospace;transform:scaleX(0.8712);">8,741.41</div><div class="t" style="left:912.66px;top:979.52px;font-size:22px;font-family:'Liberation Mono', monospace;transform:scaleX(0.8712);">5,946.54</div><div class="t" style="left:1104.18px;top:979.52px;font-size:22px;font-family:'Liberation Mono', monospace;transform:scaleX(0.8712);">-2,794.87</div><div class="t" style="left:48.01px;top:1010.43px;font-size:20.9px;transform:scaleX(0.9429);">Games and T...</div><div class="t" style="left:203.99px;top:1010.43px;font-size:20.9px;">Boxed Games</div><div class="t" style="left:610.72px;top:1011.26px;font-size:22px;font-family:'Liberation Mono', monospace;transform:scaleX(0.8712);">4.99</div><div class="t" style="left:779.17px;top:1011.26px;font-size:22px;font-family:'Liberation Mono', monospace;transform:scaleX(0.8712);">10.30</div><div class="t" style="left:958.62px;top:1011.26px;font-size:22px;font-family:'Liberation Mono', monospace;transform:scaleX(0.8712);">9.81</div><div class="t" style="left:1150.02px;top:1011.26px;font-size:22px;font-family:'Liberation Mono', monospace;transform:scaleX(0.8712);">-0.49</div><div class="t" style="left:48.01px;top:1042.17px;font-size:20.9px;transform:scaleX(0.9429);">Games and T...</div><div class="t" style="left:203.99px;top:1042.17px;font-size:20.9px;">Download Games</div><div class="t" style="left:599.11px;top:1043.00px;font-size:22px;font-family:'Liberation Mono', monospace;transform:scaleX(0.8712);">78.55</div><div class="t" style="left:767.67px;top:1043.00px;font-size:22px;font-family:'Liberation Mono', monospace;transform:scaleX(0.8712);">166.90</div><div class="t" style="left:935.95px;top:1043.00px;font-size:22px;font-family:'Liberation Mono', monospace;transform:scaleX(0.8712);">158.96</div><div class="t" style="left:1149.91px;top:1043.00px;font-size:22px;font-family:'Liberation Mono', monospace;transform:scaleX(0.8712);">-7.95</div><div class="t" style="left:47.30px;top:1073.91px;font-size:20.9px;transform:scaleX(0.9938);">Home Applia...</div><div class="t" style="left:205.66px;top:1073.91px;font-size:20.9px;">Air Conditioners</div><div class="t" style="left:587.66px;top:1074.74px;font-size:22px;font-family:'Liberation Mono', monospace;transform:scaleX(0.8712);">347.28</div><div class="t" style="left:767.82px;top:1074.74px;font-size:22px;font-family:'Liberation Mono', monospace;transform:scaleX(0.8712);">629.99</div><div class="t" style="left:936.02px;top:1074.74px;font-size:22px;font-family:'Liberation Mono', monospace;transform:scaleX(0.8712);">599.99</div><div class="t" style="left:1138.37px;top:1074.74px;font-size:22px;font-family:'Liberation Mono', monospace;transform:scaleX(0.8712);">-30.00</div><div class="t" style="left:47.30px;top:1105.65px;font-size:20.9px;transform:scaleX(0.9938);">Home Applia...</div><div class="t" style="left:204.63px;top:1105.65px;font-size:20.9px;">Coffee Machines</div><div class="t" style="left:587.38px;top:1106.48px;font-size:22px;font-family:'Liberation Mono', monospace;transform:scaleX(0.8712);">560.44</div><div class="t" style="left:767.71px;top:1106.48px;font-size:22px;font-family:'Liberation Mono', monospace;transform:scaleX(0.8712);">860.15</div><div class="t" style="left:913.04px;top:1106.48px;font-size:22px;font-family:'Liberation Mono', monospace;transform:scaleX(0.8712);">1,036.32</div><div class="t" style="left:1127.18px;top:1106.48px;font-size:22px;font-family:'Liberation Mono', monospace;transform:scaleX(0.8712);">+176.17</div><div class="t" style="left:47.30px;top:1137.39px;font-size:20.9px;transform:scaleX(0.9938);">Home Applia...</div><div class="t" style="left:203.99px;top:1137.39px;font-size:20.9px;">Fans</div><div class="t" style="left:587.76px;top:1138.22px;font-size:22px;font-family:'Liberation Mono', monospace;transform:scaleX(0.8712);">101.42</div><div class="t" style="left:767.71px;top:1138.22px;font-size:22px;font-family:'Liberation Mono', monospace;transform:scaleX(0.8712);">194.03</div><div class="t" style="left:936.02px;top:1138.22px;font-size:22px;font-family:'Liberation Mono', monospace;transform:scaleX(0.8712);">184.79</div><div class="t" style="left:1149.68px;top:1138.22px;font-size:22px;font-family:'Liberation Mono', monospace;transform:scaleX(0.8712);">-9.24</div><div class="t" style="left:47.30px;top:1169.13px;font-size:20.9px;transform:scaleX(0.9938);">Home Applia...</div><div class="t" style="left:203.99px;top:1169.13px;font-size:20.9px;">Lamps</div><div class="t" style="left:587.65px;top:1169.96px;font-size:22px;font-family:'Liberation Mono', monospace;transform:scaleX(0.8712);">517.56</div><div class="t" style="left:744.65px;top:1169.96px;font-size:22px;font-family:'Liberation Mono', monospace;transform:scaleX(0.8712);">1,225.60</div><div class="t" style="left:936.02px;top:1169.96px;font-size:22px;font-family:'Liberation Mono', monospace;transform:scaleX(0.8712);">988.39</div><div class="t" style="left:1126.60px;top:1169.96px;font-size:22px;font-family:'Liberation Mono', monospace;transform:scaleX(0.8712);">-237.21</div><div class="t" style="left:11.94px;top:1228.15px;font-size:21.8px;transform:scaleX(0.9620);">Total rows: 34</div><div class="t" style="left:162.61px;top:1228.15px;font-size:21.8px;transform:scaleX(0.9078);">Sum:</div><div class="t" style="left:215.89px;top:1228.97px;font-size:23px;font-family:'Liberation Mono', monospace;transform:scaleX(0.8523);">1.97m</div><div class="t" style="left:296.16px;top:1228.15px;font-size:21.8px;transform:scaleX(0.9174);">Avg:</div><div class="t" style="left:342.65px;top:1228.97px;font-size:23px;font-family:'Liberation Mono', monospace;transform:scaleX(0.8240);">493.08k</div><div class="t" style="left:444.28px;top:1228.15px;font-size:21.8px;transform:scaleX(1.0092);">Count: 4</div><div class="t" style="left:1626.41px;top:1234.37px;font-size:23px;font-family:'Liberation Mono', monospace;transform:scaleX(0.8398);">100</div><div class="t" style="left:1663.28px;top:1233.38px;font-size:22px;transform:scaleX(0.9113);">%</div><div class="t" style="left:1814.26px;top:1227.80px;font-size:21.5px;transform:scaleX(0.8717);">Page</div><div class="t" style="left:1882.21px;top:1227.80px;font-size:21.5px;transform:scaleX(0.9712);">1</div><div class="t" style="left:1916.39px;top:1227.80px;font-size:21.5px;transform:scaleX(1.0034);">of 2</div><div class="t" style="left:2084.90px;top:1227.80px;font-size:21.5px;transform:scaleX(1.1016);">1 to 25 of 34</div>
<div id="menu"><svg width="2263" height="1272" viewBox="0 0 2263 1272"><filter id="msh" x="-10%" y="-10%" width="120%" height="120%"><feDropShadow dx="0" dy="1" stdDeviation="2.5" flood-color="#000" flood-opacity="0.22"/></filter><rect x="27" y="190.5" width="288.5" height="509.0" fill="#ffffff" rx="2" stroke="#dcdcdc" stroke-width="1" filter="url(#msh)"/><line x1="27" y1="573.3" x2="315.5" y2="573.3" stroke="#dedede" stroke-width="1.5" /><filter id="inn"><feGaussianBlur stdDeviation="3"/></filter><filter id="hsh" x="-10%" y="-30%" width="120%" height="160%"><feDropShadow dx="0" dy="3" stdDeviation="3.5" flood-color="#000" flood-opacity="0.28"/></filter><rect x="29.8" y="318.2" width="283.6" height="68.6" fill="#ffffff" rx="7" filter="url(#hsh)"/><clipPath id="hc"><rect x="29.8" y="318.2" width="283.6" height="68.6" rx="7"/></clipPath><rect x="29.8" y="318.2" width="283.6" height="68.6" fill="none" rx="7" stroke="#888888" stroke-width="9" filter="url(#inn)" opacity="0.6" clip-path="url(#hc)"/><rect x="29.8" y="318.2" width="283.6" height="68.6" fill="none" rx="7" stroke="#f42e6e" stroke-width="3.5"/><rect x="47.5" y="208.5" width="24" height="29" fill="#ffffff" stroke="#d0d0d0" stroke-width="1.7"/><rect x="52.54" y="212.995" width="13.919999999999998" height="5.074999999999999" fill="#d3e4f6" stroke="#a9c8ee" stroke-width="1.4"/><rect x="52.828" y="222.28300000000002" width="2.3040000000000003" height="2.3040000000000003" fill="#c0c0c0" /><rect x="58.108" y="222.28300000000002" width="2.3040000000000003" height="2.3040000000000003" fill="#c0c0c0" /><rect x="63.38799999999999" y="222.28300000000002" width="2.3040000000000003" height="2.3040000000000003" fill="#c0c0c0" /><rect x="52.828" y="227.358" width="2.3040000000000003" height="2.3040000000000003" fill="#c0c0c0" /><rect x="58.108" y="227.358" width="2.3040000000000003" height="2.3040000000000003" fill="#c0c0c0" /><rect x="63.38799999999999" y="227.358" width="2.3040000000000003" height="2.3040000000000003" fill="#c0c0c0" /><rect x="52.828" y="232.288" width="2.3040000000000003" height="2.3040000000000003" fill="#c0c0c0" /><rect x="58.108" y="232.288" width="2.3040000000000003" height="2.3040000000000003" fill="#c0c0c0" /><rect x="63.38799999999999" y="232.288" width="2.3040000000000003" height="2.3040000000000003" fill="#c0c0c0" /><rect x="47.5" y="272" width="24" height="29" fill="#ffffff" stroke="#d0d0d0" stroke-width="1.7"/><rect x="52.54" y="276.495" width="13.919999999999998" height="5.074999999999999" fill="#d3e4f6" stroke="#a9c8ee" stroke-width="1.4"/><rect x="52.828" y="285.783" width="2.3040000000000003" height="2.3040000000000003" fill="#c0c0c0" /><rect x="58.108" y="285.783" width="2.3040000000000003" height="2.3040000000000003" fill="#c0c0c0" /><rect x="63.38799999999999" y="285.783" width="2.3040000000000003" height="2.3040000000000003" fill="#c0c0c0" /><rect x="52.828" y="290.858" width="2.3040000000000003" height="2.3040000000000003" fill="#c0c0c0" /><rect x="58.108" y="290.858" width="2.3040000000000003" height="2.3040000000000003" fill="#c0c0c0" /><rect x="63.38799999999999" y="290.858" width="2.3040000000000003" height="2.3040000000000003" fill="#c0c0c0" /><rect x="52.828" y="295.788" width="2.3040000000000003" height="2.3040000000000003" fill="#c0c0c0" /><rect x="58.108" y="295.788" width="2.3040000000000003" height="2.3040000000000003" fill="#c0c0c0" /><rect x="63.38799999999999" y="295.788" width="2.3040000000000003" height="2.3040000000000003" fill="#c0c0c0" /><rect x="47.5" y="335" width="24" height="29.5" fill="#ffffff" stroke="#333333" stroke-width="1.7"/><rect x="52.54" y="339.5725" width="13.919999999999998" height="5.1625" fill="#73b0e8" stroke="#0e4ea6" stroke-width="1.4"/><rect x="52.828" y="349.0405" width="2.3040000000000003" height="2.3040000000000003" fill="#333333" /><rect x="58.108" y="349.0405" width="2.3040000000000003" height="2.3040000000000003" fill="#333333" /><rect x="63.38799999999999" y="349.0405" width="2.3040000000000003" height="2.3040000000000003" fill="#333333" /><rect x="52.828" y="354.20300000000003" width="2.3040000000000003" height="2.3040000000000003" fill="#333333" /><rect x="58.108" y="354.20300000000003" width="2.3040000000000003" height="2.3040000000000003" fill="#333333" /><rect x="63.38799999999999" y="354.20300000000003" width="2.3040000000000003" height="2.3040000000000003" fill="#333333" /><rect x="52.828" y="359.218" width="2.3040000000000003" height="2.3040000000000003" fill="#333333" /><rect x="58.108" y="359.218" width="2.3040000000000003" height="2.3040000000000003" fill="#333333" /><rect x="63.38799999999999" y="359.218" width="2.3040000000000003" height="2.3040000000000003" fill="#333333" /><rect x="44.1" y="398.6" width="27.1" height="19.6" fill="#ffffff" stroke="#d0d0d0" stroke-width="1.6"/><rect x="47.8" y="402.2" width="26.4" height="19.5" fill="#ffffff" stroke="#d0d0d0" stroke-width="1.6"/><rect x="56.8" y="406.7" width="14.4" height="22.1" fill="#ffffff" stroke="#d0d0d0" stroke-width="1.7"/><rect x="59.824" y="410.1255" width="8.352" height="3.8675" fill="#d3e4f6" stroke="#a9c8ee" stroke-width="1.4"/><rect x="59.99679999999999" y="417.3903" width="1.3824" height="1.3824" fill="#c0c0c0" /><rect x="63.16479999999999" y="417.3903" width="1.3824" height="1.3824" fill="#c0c0c0" /><rect x="66.3328" y="417.3903" width="1.3824" height="1.3824" fill="#c0c0c0" /><rect x="59.99679999999999" y="421.25780000000003" width="1.3824" height="1.3824" fill="#c0c0c0" /><rect x="63.16479999999999" y="421.25780000000003" width="1.3824" height="1.3824" fill="#c0c0c0" /><rect x="66.3328" y="421.25780000000003" width="1.3824" height="1.3824" fill="#c0c0c0" /><rect x="59.99679999999999" y="425.01480000000004" width="1.3824" height="1.3824" fill="#c0c0c0" /><rect x="63.16479999999999" y="425.01480000000004" width="1.3824" height="1.3824" fill="#c0c0c0" /><rect x="66.3328" y="425.01480000000004" width="1.3824" height="1.3824" fill="#c0c0c0" /><path d="M55 485.5H44V461.5H75V485.5H69" fill="none" stroke="#444" stroke-width="1.6"/><path d="M64 476V492.5 M60.5 476H67.5 M60.5 492.5H67.5" fill="none" stroke="#0e4ea6" stroke-width="1.6"/><path d="M54 549.5H44V526H75V549.5H72" fill="none" stroke="#444" stroke-width="1.6"/><text x="53.2" y="554.6" font-family="Liberation Sans" font-weight="700" font-size="18.5" fill="#0e4ea6" textLength="16.8" lengthAdjust="spacingAndGlyphs">%</text><path d="M53 612.5H44V589.5H75V612.5H70" fill="none" stroke="#444" stroke-width="1.6"/><circle cx="61" cy="612" r="7.3" fill="#fff" stroke="#0e4ea6" stroke-width="1.6"/><path d="M57 612H65 M61 608V616" stroke="#0e4ea6" stroke-width="1.6"/><rect x="48.5" y="654.5" width="22" height="8.5" fill="none" stroke="#444" stroke-width="1.6"/><rect x="48.5" y="672.5" width="22" height="9" fill="none" stroke="#444" stroke-width="1.6"/><line x1="47" y1="667.8" x2="67" y2="667.8" stroke="#0e4ea6" stroke-width="1.4" stroke-dasharray="2.5 1.8"/><path d="M68.5 665L74 670.5 M74 665L68.5 670.5" stroke="#c0203a" stroke-width="1.5"/></svg>
<div class="t" style="left:87.01px;top:212.78px;font-size:22px;color:#c6c6c6;transform:scaleX(0.9331);">Insert Sum of rows</div><div class="t" style="left:86.99px;top:276.28px;font-size:22px;color:#c6c6c6;transform:scaleX(0.9415);">Insert Avg of rows</div><div class="t" style="left:87.86px;top:339.58px;font-size:22px;transform:scaleX(0.9307);">Calculated Row</div><div class="t" style="left:88.45px;top:403.28px;font-size:22px;color:#c6c6c6;transform:scaleX(0.9218);">Template Row</div><div class="t" style="left:88.10px;top:466.78px;font-size:22px;transform:scaleX(0.9116);">Static Row</div><div class="t" style="left:88.85px;top:530.28px;font-size:22px;transform:scaleX(0.9505);">% Contribution Row</div><div class="t" style="left:87.33px;top:593.38px;font-size:22px;transform:scaleX(0.9257);">Empty Row</div><div class="t" style="left:87.38px;top:657.28px;font-size:22px;transform:scaleX(0.8976);">Break Row</div></div>
</body></html>
